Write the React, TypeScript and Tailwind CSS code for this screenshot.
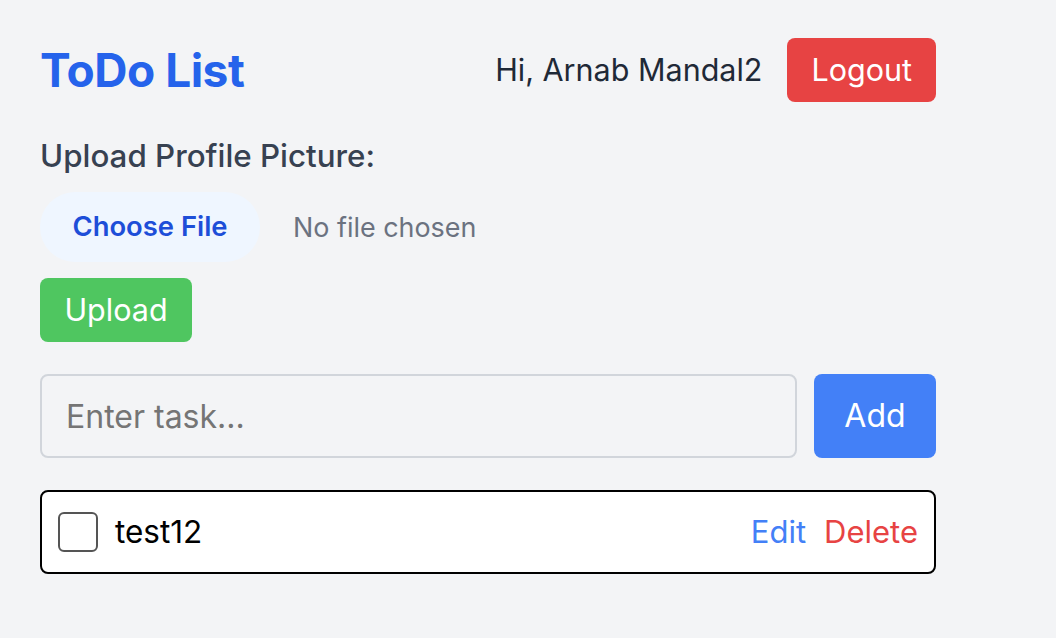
export default function App() {
  return (
    <div className="min-h-screen bg-[#f3f4f6] font-['Inter',_'Liberation_Sans',_sans-serif]">
      <div className="w-[896px] ml-[40px] pt-[38px]">
        {/* Header */}
        <div className="flex items-center justify-between">
          <h1 className="text-[46px] leading-[64px] font-bold text-[#2563eb] tracking-[-0.5px]">ToDo List</h1>
          <div className="flex items-center gap-[25px]">
            <span className="text-[30.5px] text-[#1f2937]">Hi, Arnab Mandal2</span>
            <button className="h-[64px] px-[24px] rounded-[8px] bg-[#e74343] text-white text-[30.5px]">
              Logout
            </button>
          </div>
        </div>

        {/* Profile upload */}
        <div className="mt-[34px]">
          <label className="block text-[31.3px] leading-[40px] font-medium text-[#374151]">
            Upload Profile Picture:
          </label>
          <div className="mt-[16px] flex items-center gap-[33px]">
            <span className="h-[70px] w-[220px] rounded-full bg-[#eff6ff] text-[#1d4ed8] text-[27.4px] font-semibold flex items-center justify-center">
              Choose File
            </span>
            <span className="text-[26.9px] text-[#6b7280]">No file chosen</span>
          </div>
          <button className="mt-[16px] h-[64px] w-[152px] rounded-[8px] bg-[#4fc660] text-white text-[30.5px]">
            Upload
          </button>
        </div>

        {/* Add task */}
        <div className="mt-[32px] flex gap-[17px]">
          <input
            type="text"
            placeholder="Enter task..."
            className="flex-1 h-[84px] px-[24px] rounded-[8px] border-2 border-[#d1d5db] bg-transparent text-[32px] placeholder-[#757575] outline-none"
          />
          <button className="w-[122px] h-[84px] rounded-[8px] bg-[#4380f7] text-white text-[32px]">Add</button>
        </div>

        {/* Task list */}
        <ul className="mt-[32px]">
          <li className="h-[84px] flex items-center justify-between px-[16px] border-2 border-black rounded-[8px] bg-white">
            <div className="flex items-center gap-[17px]">
              <span className="w-[40px] h-[40px] rounded-[6px] border-2 border-[#555555] bg-white" />
              <span className="text-[31.5px] text-black">test12</span>
            </div>
            <div className="flex items-center gap-[18px] text-[31px]">
              <button className="text-[#4380f7]">Edit</button>
              <button className="text-[#e74343]">Delete</button>
            </div>
          </li>
        </ul>
      </div>
    </div>
  );
}
